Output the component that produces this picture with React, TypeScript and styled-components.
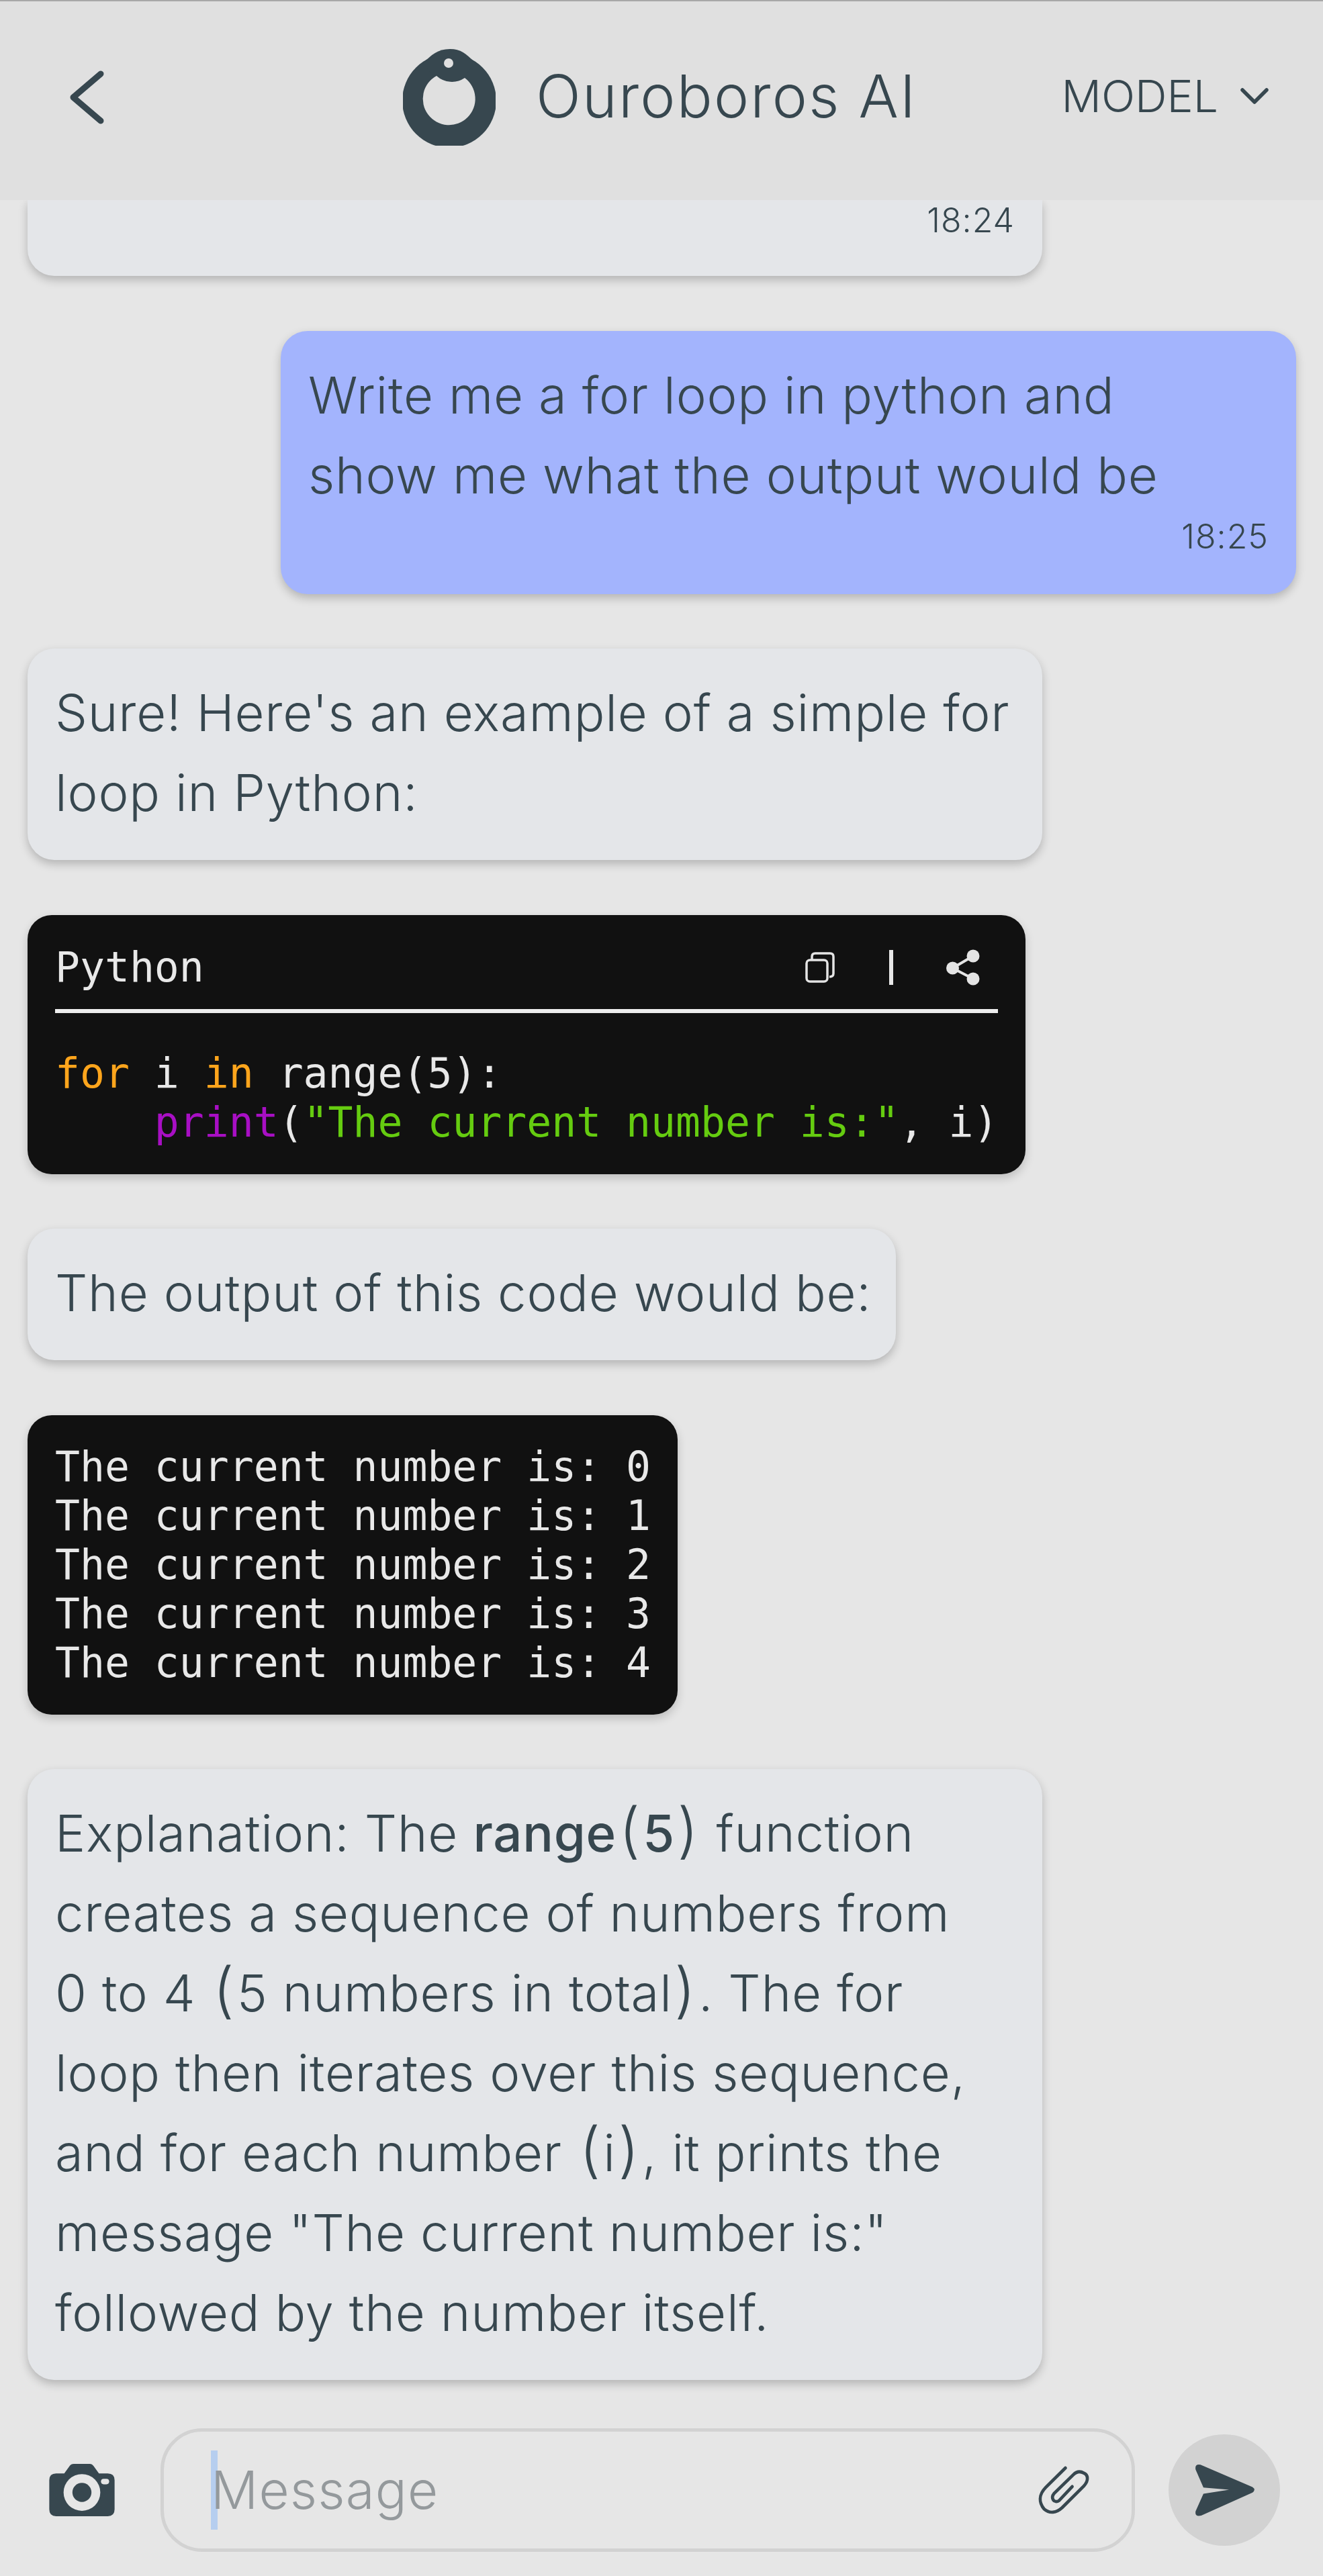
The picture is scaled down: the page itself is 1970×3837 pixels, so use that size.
import { createGlobalStyle } from 'styled-components';
import styled from 'styled-components';

const GlobalStyle = createGlobalStyle`
  html, body {
    margin: 0;
    padding: 0;
    background: #e6e6e6;
  }
  * {
    box-sizing: border-box;
  }
`;

const Page = styled.div`
  width: 1970px;
  height: 3837px;
  display: flex;
  flex-direction: column;
  overflow: hidden;
  background: #e6e6e6;
  color: #37474f;
  font-family: Inter, "Liberation Sans", sans-serif;
  font-weight: 300;
`;

const Header = styled.header`
  flex: none;
  height: 298px;
  display: flex;
  align-items: center;
  padding: 0 80px 10px 103px;
  background: #e0e0e0;
  border-top: 2px solid #a8a8a8;
`;

const TitleGroup = styled.div`
  display: flex;
  align-items: center;
  gap: 60px;
  margin-left: 445px;
`;

const Title = styled.h1`
  margin: 0 0 5px;
  font-size: 88px;
  font-weight: 300;
  letter-spacing: 2.2px;
  line-height: 1;
`;

const ModelButton = styled.div`
  display: flex;
  align-items: center;
  gap: 32px;
  margin-left: auto;
  padding-bottom: 5px;
  font-size: 66px;
  font-weight: 300;
`;

const Messages = styled.main`
  flex: 1;
  min-height: 0;
  display: flex;
  flex-direction: column;
  align-items: flex-start;
  gap: 81.5px;
  overflow: hidden;
`;

const Bubble = styled.div<{ $width: number; $mine?: boolean; $clipped?: boolean }>`
  width: ${(p) => p.$width}px;
  flex: none;
  margin-left: ${(p) => (p.$mine ? '418px' : '41px')};
  padding: ${(p) => (p.$clipped ? '0' : '36px')} 41px 41px;
  border-radius: ${(p) => (p.$clipped ? '0 0 40px 40px' : '40px')};
  background: ${(p) => (p.$mine ? '#a3b4fd' : '#e4e6e9')};
  box-shadow: 0 6px 14px rgba(0, 0, 0, 0.22);
  font-size: 76px;
  font-weight: 340;
  letter-spacing: 0.8px;
  line-height: 119px;
  white-space: nowrap;
`;

const Strong = styled.strong`
  font-weight: 500;
`;

const Paren = styled.span`
  font-size: 1.18em;
  line-height: 0;
  font-weight: 300;
  margin: 0 0.04em;
`;

const Time = styled.div<{ $first?: boolean }>`
  height: 60px;
  margin: ${(p) => (p.$first ? '0 0 12px' : '2px 0 15px')};
  text-align: right;
  font-size: 50px;
  font-weight: 300;
  letter-spacing: 1px;
  line-height: 60px;
`;

const CodeCard = styled.section<{ $width: number }>`
  width: ${(p) => p.$width}px;
  flex: none;
  margin-left: 41px;
  padding: 40px 41px 41px;
  border-radius: 36px;
  background: #111111;
  color: #e8e8e8;
  box-shadow: 0 6px 14px rgba(0, 0, 0, 0.18);
  font-family: "DejaVu Sans Mono", "Liberation Mono", monospace;
  font-size: 61.4px;
  line-height: 73px;
`;

const CodeHead = styled.div`
  display: flex;
  align-items: center;
  height: 146px;
  margin-top: -40px;
  padding: 30px 0 14px;
  border-bottom: 6px solid #eeeeee;
`;

const CodeActions = styled.div`
  display: flex;
  align-items: center;
  margin-left: auto;
  margin-right: 27px;
`;

const Divider = styled.span`
  width: 6px;
  height: 52px;
  margin: 0 79px 0 81px;
  background: #e8e8e8;
`;

const Code = styled.pre`
  margin: 0;
  font: inherit;
`;

const CodeBody = styled(Code)`
  margin-top: 53px;
`;

const Keyword = styled.span`
  color: #ffa51c;
`;

const Builtin = styled.span`
  color: #a80fc4;
`;

const Str = styled.span`
  color: #65cc10;
`;

const Composer = styled.footer`
  flex: none;
  display: flex;
  align-items: center;
  padding: 0 64px 36px 73px;
`;

const InputBox = styled.div`
  flex: 1;
  height: 184px;
  display: flex;
  align-items: center;
  margin: 0 50px 0 68px;
  padding: 0 60px 0 70px;
  border: 5px solid #d2d2d2;
  border-radius: 62px;
`;

const Caret = styled.span`
  width: 10px;
  height: 118px;
  flex: none;
  margin-right: -10px;
  background: rgba(150, 190, 245, 0.6);
`;

const Placeholder = styled.span`
  font-size: 78px;
  letter-spacing: 1.2px;
  line-height: 1;
  color: #94999c;
`;

const Clip = styled.svg`
  margin-left: auto;
`;

const SendButton = styled.div`
  width: 166px;
  height: 166px;
  flex: none;
  display: flex;
  align-items: center;
  justify-content: center;
  border-radius: 50%;
  background: #d2d2d2;
`;

function Logo() {
  return (
    <svg width="138" height="144" viewBox="20 13 138 144">
      <circle cx="89" cy="90" r="70" fill="#37474f" />
      <path d="M50 34C62 22 72 13 90 13C106 13 114 20 126 32L110 60H70Z" fill="#37474f" />
      <path d="M70 53A39 39 0 1 0 112 56A34 34 0 0 1 70 53Z" fill="#e0e0e0" />
      <circle cx="88" cy="34" r="7" fill="#e0e0e0" />
    </svg>
  );
}

function CopyIcon() {
  return (
    <svg width="44" height="46" viewBox="0 0 44 46" fill="none" stroke="#e4e4e4" strokeWidth="3.5">
      <rect x="2" y="12" width="31" height="32" rx="5" />
      <path d="M10 11V7Q10 2 15 2H37Q42 2 42 7V32Q42 37 36 37" />
    </svg>
  );
}

function ShareIcon() {
  return (
    <svg width="50" height="54" viewBox="0 0 50 54" fill="#e4e4e4">
      <circle cx="40" cy="10" r="9.5" />
      <circle cx="9.500" cy="28" r="9.5" />
      <circle cx="40" cy="44" r="9.5" />
      <path d="M9.500 28L40 10M9.500 28L40 44" stroke="#e4e4e4" strokeWidth="4" />
    </svg>
  );
}

function CameraIcon() {
  return (
    <svg width="98" height="78" viewBox="0 0 96 77">
      <path
        d="M10 14H22L30 3Q32 0 36 0H60Q63 0 65 3L73 14H86Q96 14 96 24V67Q96 77 86 77H10Q0 77 0 67V24Q0 14 10 14Z"
        fill="#37474f"
      />
      <circle cx="48" cy="42" r="27" fill="#e6e6e6" />
      <circle cx="48" cy="42" r="14" fill="#37474f" />
      <rect x="76" y="22" width="12" height="8" rx="4" fill="#e6e6e6" />
    </svg>
  );
}

function ClipIcon() {
  return (
    <Clip width="82" height="77" viewBox="50 160 245 230" fill="none" stroke="#37474f" strokeWidth="14" strokeLinecap="round">
      <path d="M180 175L92 262C60 295 62 330 85 358C110 380 140 375 165 352L262 255C285 230 280 205 262 198C245 188 228 192 215 205L130 288C112 310 130 335 152 320L210 258" />
    </Clip>
  );
}

function SendIcon() {
  return (
    <svg width="93" height="83" viewBox="750 150 280 250">
      <path
        d="M782 160L1015 260Q1032 272 1015 285L785 388Q755 395 760 368L795 290L910 272L795 262L760 182Q755 155 782 160Z"
        fill="#37474f"
      />
    </svg>
  );
}

export default function App() {
  return (
    <>
      <GlobalStyle />
      <Page>
        <Header>
          <svg width="52" height="80" viewBox="0 0 52 80" fill="none" stroke="#37474f" strokeWidth="9" strokeLinecap="round" strokeLinejoin="round">
            <path d="M47 5L6 40L47 75" />
          </svg>
          <TitleGroup>
            <Logo />
            <Title>Ouroboros AI</Title>
          </TitleGroup>
          <ModelButton>
            MODEL
            <svg width="44" height="28" viewBox="0 0 44 28" fill="none" stroke="#37474f" strokeWidth="5.500" strokeLinecap="round" strokeLinejoin="round">
              <path d="M4 5L22 23L40 5" />
            </svg>
          </ModelButton>
        </Header>

        <Messages>
          <Bubble $width={1511} $clipped>
            <Time $first>18:24</Time>
          </Bubble>

          <Bubble $width={1512} $mine>
            Write me a for loop in python and
            <br />
            show me what the output would be
            <Time>18:25</Time>
          </Bubble>

          <Bubble $width={1511}>
            Sure! Here's an example of a simple for
            <br />
            loop in Python:
          </Bubble>

          <CodeCard $width={1486}>
            <CodeHead>
              Python
              <CodeActions>
                <CopyIcon />
                <Divider />
                <ShareIcon />
              </CodeActions>
            </CodeHead>
            <CodeBody>
              <Keyword>for</Keyword> i <Keyword>in</Keyword> range(5):
              {'\n    '}
              <Builtin>print</Builtin>(<Str>"The current number is:"</Str>, i)
            </CodeBody>
          </CodeCard>

          <Bubble $width={1293}>The output of this code would be:</Bubble>

          <CodeCard $width={968}>
            <Code>
              {[0, 1, 2, 3, 4].map((n) => `The current number is: ${n}`).join('\n')}
            </Code>
          </CodeCard>

          <Bubble $width={1511}>
            Explanation: The <Strong>range<Paren>(</Paren>5<Paren>)</Paren></Strong> function
            <br />
            creates a sequence of numbers from
            <br />
            0 to 4 <Paren>(</Paren>5 numbers in total<Paren>)</Paren>. The for
            <br />
            loop then iterates over this sequence,
            <br />
            and for each number <Paren>(</Paren>i<Paren>)</Paren>, it prints the
            <br />
            message "The current number is:"
            <br />
            followed by the number itself.
          </Bubble>
        </Messages>

        <Composer>
          <CameraIcon />
          <InputBox>
            <Caret />
            <Placeholder>Message</Placeholder>
            <ClipIcon />
          </InputBox>
          <SendButton>
            <SendIcon />
          </SendButton>
        </Composer>
      </Page>
    </>
  );
}
